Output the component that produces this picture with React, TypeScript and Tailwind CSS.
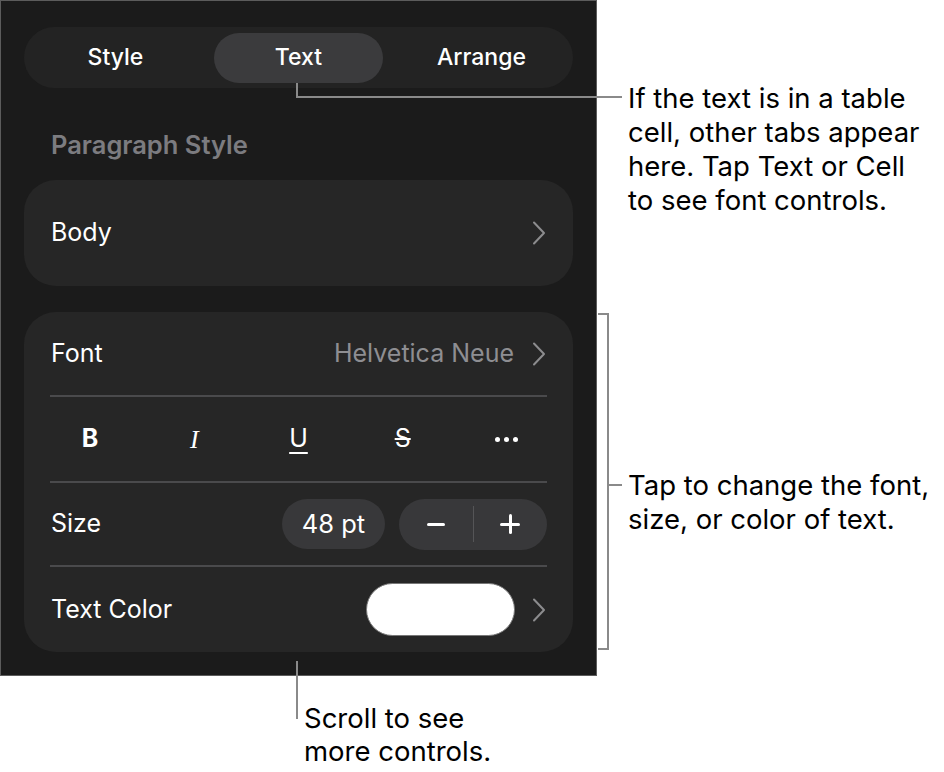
import React from "react";

const font = { fontFamily: "Inter, 'Noto Sans', sans-serif" };

function Chevron() {
  return (
    <svg width="14" height="24" viewBox="0 0 14 24" className="shrink-0">
      <path d="M2 1.5 L12 12 L2 22.5" fill="none" stroke="#8c8c8e" strokeWidth="2" strokeLinecap="round" strokeLinejoin="round" />
    </svg>
  );
}

function Divider() {
  return <div className="mx-[26px] h-[2px] bg-[#4a4a4c]" />;
}

const tabs = ["Style", "Text", "Arrange"];

export default function App() {
  return (
    <div className="relative h-[772px] w-[944px] overflow-hidden bg-white" style={font}>
      {/* panel */}
      <div className="h-[676px] w-[597px] border border-[#5c5c5c] bg-[#1b1b1b] px-[23px] pt-[26px]">
        <div className="grid h-[61px] grid-cols-3 items-center rounded-full bg-[#232323]">
          {tabs.map((t) => (
            <div
              key={t}
              className={
                t === "Text"
                  ? "mx-[7px] flex h-[50px] items-center justify-center rounded-full bg-[#3b3b3d] text-[23px] font-medium text-white"
                  : "flex h-[50px] items-center justify-center text-[23px] font-medium text-white"
              }
            >
              {t}
            </div>
          ))}
        </div>

        <div className="mt-[42px] pl-[27px] text-[25.5px] font-semibold leading-[30px] text-[#7c7c80]">
          Paragraph Style
        </div>

        <div className="mt-[20px] flex h-[106px] items-center justify-between rounded-[32px] bg-[#262626] pl-[27px] pr-[27px]">
          <span className="text-[25px] text-white">Body</span>
          <Chevron />
        </div>

        <div className="mt-[26px] rounded-[32px] bg-[#262626]">
          <div className="flex h-[83px] items-center justify-between pl-[27px] pr-[27px]">
            <span className="text-[25px] text-white">Font</span>
            <div className="flex items-center gap-[18px]">
              <span className="text-[25px] text-[#8e8e92]">Helvetica Neue</span>
              <Chevron />
            </div>
          </div>
          <Divider />
          <div className="grid h-[84px] grid-cols-5 items-center px-[14px] text-white">
            <span className="text-center text-[25px] font-bold">B</span>
            <span className="text-center text-[26px] italic" style={{ fontFamily: "'Liberation Serif', serif" }}>I</span>
            <span className="text-center text-[25px] underline decoration-[2px] underline-offset-[5px]">U</span>
            <span className="text-center text-[25px] line-through decoration-[2px]">S</span>
            <span className="flex justify-center gap-[4px]">
              <span className="h-[5px] w-[5px] rounded-full bg-white" />
              <span className="h-[5px] w-[5px] rounded-full bg-white" />
              <span className="h-[5px] w-[5px] rounded-full bg-white" />
            </span>
          </div>
          <Divider />
          <div className="flex h-[82px] items-center justify-between pl-[27px] pr-[26px]">
            <span className="text-[25px] text-white">Size</span>
            <div className="flex items-center gap-[14px]">
              <div className="flex h-[50px] w-[103px] items-center justify-center rounded-full bg-[#38383a] text-[25.5px] text-white">
                48 pt
              </div>
              <div className="flex h-[51px] w-[148px] items-center rounded-full bg-[#38383a]">
                <div className="flex flex-1 items-center justify-center">
                  <span className="h-[3px] w-[18px] rounded bg-white" />
                </div>
                <div className="h-[36px] w-[1px] bg-[#555557]" />
                <div className="relative flex flex-1 items-center justify-center">
                  <span className="h-[3px] w-[20px] rounded bg-white" />
                  <span className="absolute h-[20px] w-[3px] rounded bg-white" />
                </div>
              </div>
            </div>
          </div>
          <Divider />
          <div className="flex h-[85px] items-center justify-between pl-[27px] pr-[27px]">
            <span className="text-[25px] text-white">Text Color</span>
            <div className="flex items-center gap-[17px]">
              <div className="h-[53px] w-[149px] rounded-full border border-[#777] bg-white" />
              <Chevron />
            </div>
          </div>
        </div>
      </div>

      {/* callout: tabs */}
      <div className="absolute left-[296px] top-[83px] h-[15px] w-[2px] bg-[#8a8a8a]" />
      <div className="absolute left-[296px] top-[96px] h-[2px] w-[326px] bg-[#8a8a8a]" />
      <div className="absolute left-[628px] top-[81px] text-[27.5px] leading-[34px] text-black">
        If the text is in a table
        <br />
        cell, other tabs appear
        <br />
        here. Tap Text or Cell
        <br />
        to see font controls.
      </div>

      {/* callout: bracket */}
      <div className="absolute left-[607px] top-[313px] h-[337px] w-[2px] bg-[#8a8a8a]" />
      <div className="absolute left-[598px] top-[313px] h-[2px] w-[10px] bg-[#8a8a8a]" />
      <div className="absolute left-[598px] top-[648px] h-[2px] w-[10px] bg-[#8a8a8a]" />
      <div className="absolute left-[608px] top-[484px] h-[2px] w-[14px] bg-[#8a8a8a]" />
      <div className="absolute left-[628px] top-[468px] text-[27.5px] leading-[34px] text-black">
        Tap to change the font,
        <br />
        size, or color of text.
      </div>

      {/* callout: scroll */}
      <div className="absolute left-[296px] top-[661px] h-[58px] w-[2px] bg-[#8a8a8a]" />
      <div className="absolute left-[304px] top-[702px] text-[27.5px] leading-[33px] text-black">
        Scroll to see
        <br />
        more controls.
      </div>
    </div>
  );
}
